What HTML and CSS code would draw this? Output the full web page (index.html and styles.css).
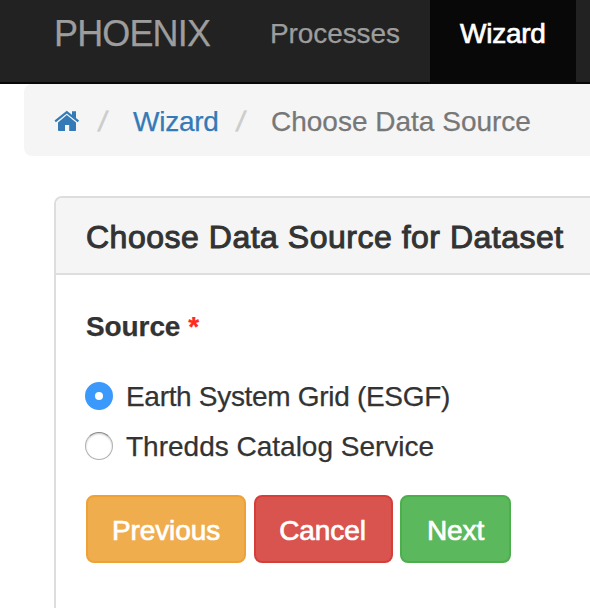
FILE: index.html
```html
<!DOCTYPE html>
<html lang="en">
<head>
<meta charset="utf-8">
<title>Phoenix</title>
<link rel="stylesheet" href="styles.css">
</head>
<body>
<nav class="navbar">
  <a class="brand"><span class="t t-brand">PHOENIX</span></a>
  <a class="nav-item"><span class="t t-proc">Processes</span></a>
  <a class="nav-item active"><span class="t t-wiz">Wizard</span></a>
</nav>
<ol class="breadcrumb">
  <li class="home"><svg width="26" height="22" viewBox="0 0 26 22"><path d="M12.800 5 22 12.500V20.200Q22 21 21.200 21H15.200V15H11V21H4.800Q4 21 4 20.200V12.500Z"/><path d="M1.200 11.300 12.800 2.100 24.400 11.300" class="roof"/><path d="M18 1.200H22V9L18 5.800Z"/></svg></li>
  <li class="sep"><span>/</span></li>
  <li class="link"><span class="t t-crumb">Wizard</span></li>
  <li class="sep"><span>/</span></li>
  <li class="current"><span class="t t-current">Choose Data Source</span></li>
</ol>
<section class="panel">
  <h3 class="panel-heading"><span class="t t-heading">Choose Data Source for Dataset</span></h3>
  <form class="panel-body">
    <div class="label"><span class="t t-source">Source</span><span class="required">*</span></div>
    <label class="option"><span class="radio checked"></span><span class="t t-esgf">Earth System Grid (ESGF)</span></label>
    <label class="option"><span class="radio"></span><span class="t t-thredds">Thredds Catalog Service</span></label>
    <div class="actions">
      <button type="button" class="btn warning"><span class="t t-prev">Previous</span></button>
      <button type="button" class="btn danger"><span class="t t-cancel">Cancel</span></button>
      <button type="button" class="btn success"><span class="t t-next">Next</span></button>
    </div>
  </form>
</section>
</body>
</html>
```
FILE: styles.css
```css
* { box-sizing: border-box; }
body { margin: 0; background: #fff; color: #333; font: 28px/40px "Liberation Sans", Arial, sans-serif; -webkit-text-stroke: .25px; }
.t { white-space: nowrap; }
.navbar { display: flex; height: 84px; background: #222; border-bottom: 2px solid #080808; color: #9d9d9d; }
.brand { width: 240px; padding: 14px 0 0 54px; font-size: 36px; letter-spacing: -.85px; }
.nav-item { width: 190px; padding: 14px 0 0 30px; }
.t-proc { letter-spacing: -.1px; }
.t-wiz { letter-spacing: -.25px; }
.nav-item.active { width: 146px; background: #080808; color: #fff; -webkit-text-stroke: .7px; }
.breadcrumb { display: flex; height: 72px; margin: 0 0 40px 24px; padding: 18px 0 0 30px; list-style: none; background: #f5f5f5; border-radius: 8px 0 0 8px; color: #777; }
.home { width: 43px; }
.home svg { display: block; margin-top: 8px; fill: #337ab7; }
.roof { fill: none; stroke: #337ab7; stroke-width: 2.2; }
.sep { width: 36px; color: #ccc; -webkit-text-stroke: .6px; }
.sep span { display: inline-block; transform: skewX(-9deg); margin-left: 1.5px; }
.link { width: 102px; color: #337ab7; }
.t-crumb { letter-spacing: -.25px; }
.panel { height: 412px; margin-left: 54px; border: solid #ddd; border-width: 2px 0 0 2px; border-radius: 8px 0 0 0; }
.panel-heading { height: 77px; margin: 0; padding: 19px 0 0 30px; background: #f5f5f5; border-bottom: 2px solid #ddd; border-radius: 6px 0 0 0; font-size: 32px; font-weight: 400; letter-spacing: .51px; -webkit-text-stroke: 1px; }
.panel-body { padding: 32px 0 0 30px; }
.label { display: flex; gap: 8px; margin-bottom: 29px; font-weight: 700; }
.t-source { letter-spacing: -.1px; }
.required { color: #ff2b1d; }
.option { display: flex; align-items: center; height: 40px; margin-bottom: 10px; }
.option .t { padding-top: 2px; }
.t-esgf { letter-spacing: -.31px; }
.radio { width: 28px; height: 28px; margin: 0 13px 0 -1px; border: 1px solid #b0b0b0; border-top-color: #888; border-radius: 50%; background: #fff; box-shadow: inset 0 1px 2px #ccc; }
.radio.checked { border: 10px solid #3b99fc; box-shadow: none; }
.actions { display: flex; margin-top: 29px; }
.btn { height: 68px; padding: 4px 0 0; border: 2px solid; border-radius: 8px; font: inherit; letter-spacing: -.1px; color: #fff; -webkit-text-stroke: .7px #fff; }
.warning { width: 160px; margin-right: 8px; background: #f0ad4e; border-color: #eea236; }
.danger { width: 139px; margin-right: 7px; padding-right: 2px; background: #d9534f; border-color: #d43f3a; }
.success { width: 111px; background: #5cb85c; border-color: #4cae4c; }
```
